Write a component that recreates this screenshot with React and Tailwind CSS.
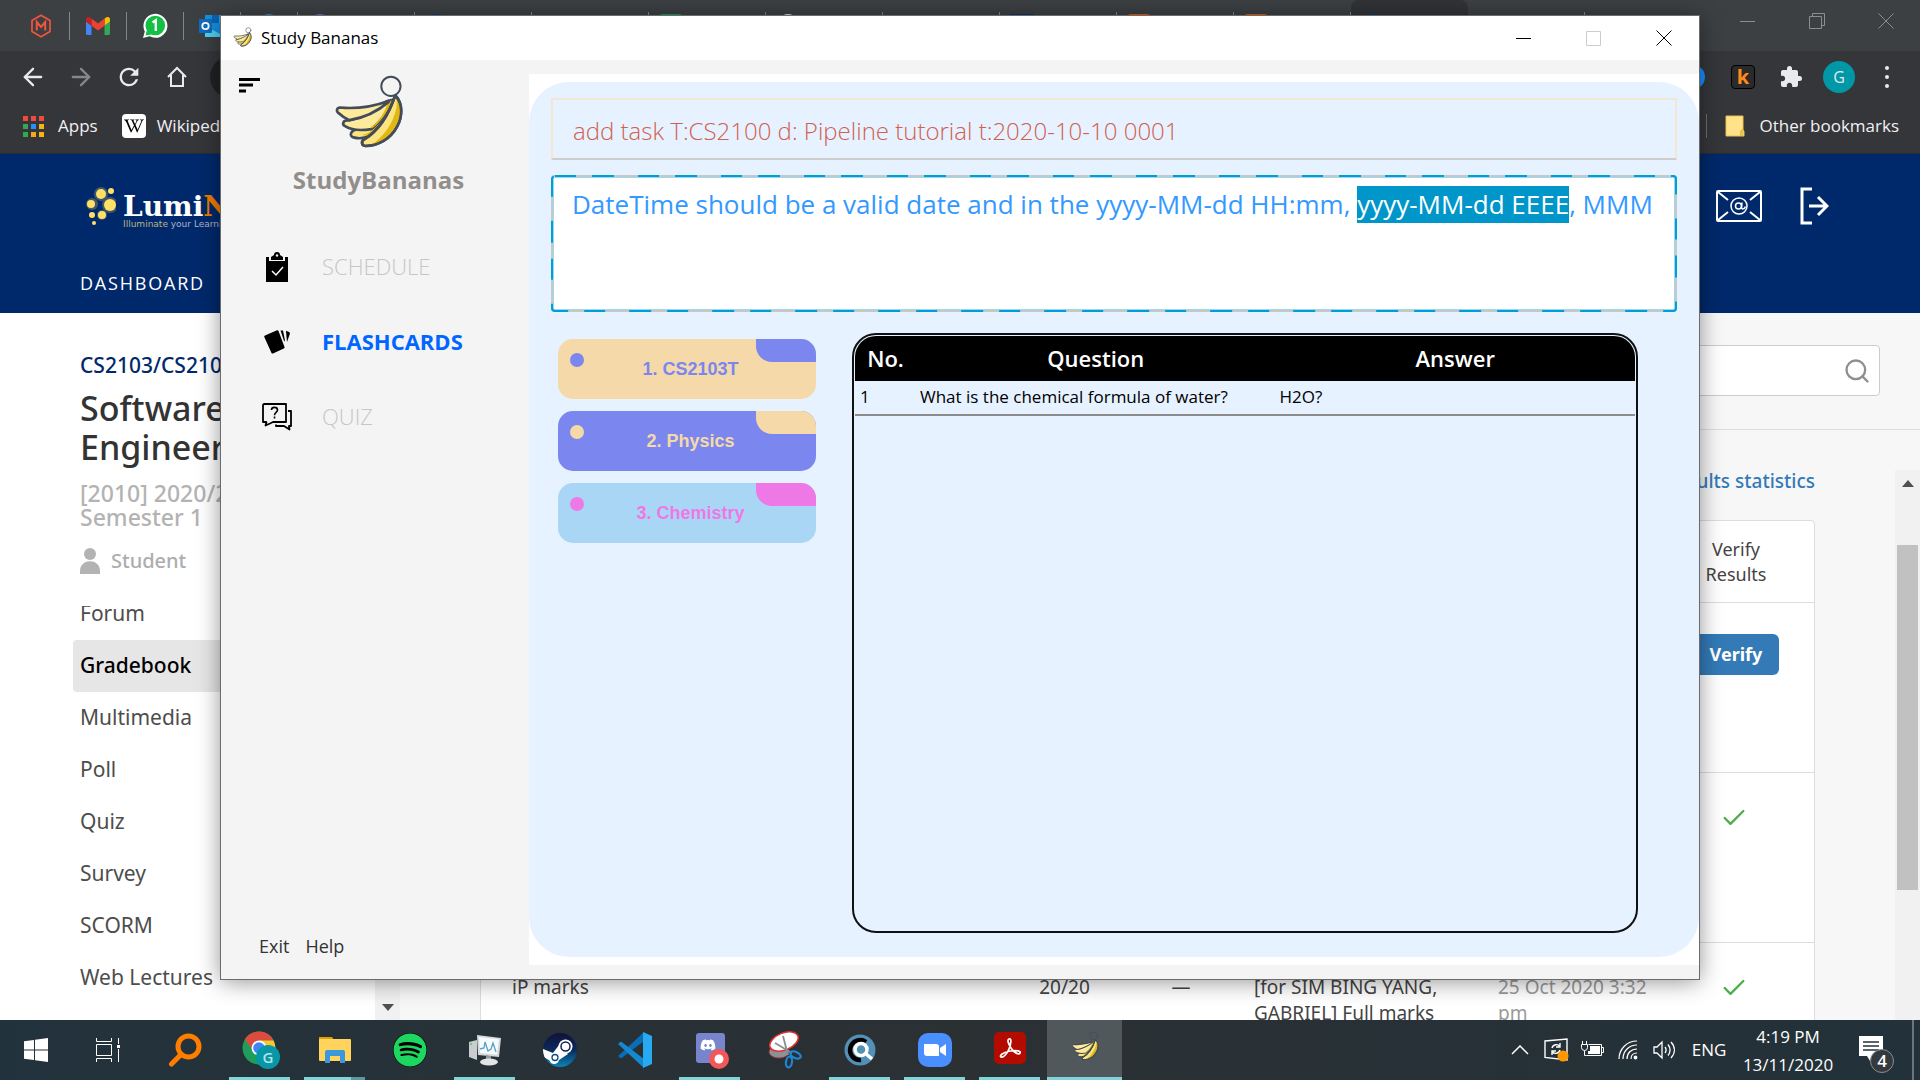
import React from "react";
import { FaSpotify, FaDiscord, FaWikipediaW } from "react-icons/fa";
import { MdExtension, MdRefresh } from "react-icons/md";
import { ArrowLeft, ArrowRight, Check, Search } from "lucide-react";

/* ---------- Icons ---------- */

function Bananas({ className }) {
  return (
    <svg viewBox="328 40 210 226" className={className} fill="none" stroke="#434c57" strokeWidth="8" strokeLinejoin="round" strokeLinecap="round" aria-hidden="true">
      <circle cx="499" cy="77" r="29" strokeWidth="6" />
      <path d="M396 206C378 210 372 226 386 231C402 236 420 233 436 228L458 200Z" fill="#fde480" />
      <path d="M412 224C430 220 444 210 456 196L470 200L440 230Z" fill="#e3b711" stroke="none" />
      <path d="M372 180C354 178 350 192 362 198C382 210 404 212 440 206C468 184 488 158 504 118L486 122C455 150 415 172 372 180Z" fill="#fdea9c" />
      <path d="M442 204C468 184 488 158 504 118L488 128C480 160 460 186 438 200Z" fill="#e3b711" stroke="none" />
      <path d="M492 121C445 138 395 146 345 141C334 143 334 154 343 159C352 168 362 174 374 179C420 172 462 150 492 124Z" fill="#fdea9c" />
      <path d="M512 104C536 130 534 168 518 198C498 236 460 257 422 257C409 256 409 241 420 236C462 210 492 165 512 104Z" fill="#fde480" />
      <path d="M517 114C533 140 529 172 514 196C496 228 470 246 442 252C476 230 506 190 516 140Z" fill="#e3b711" stroke="none" />
      <path d="M512 104C536 130 534 168 518 198C498 236 460 257 422 257C409 256 409 241 420 236C462 210 492 165 512 104Z" />
    </svg>
  );
}

function HexM() {
  return (
    <svg viewBox="0 0 24 24" className="size-6" fill="none" stroke="#f2543d" strokeWidth="1.7" aria-hidden="true">
      <path d="M12 1.2l9 5.3v11L12 22.8l-9-5.3v-11z" />
      <path d="M7.8 16.5V8l4.2 5 4.2-5v8.5" strokeWidth="2" />
    </svg>
  );
}

function Gmail() {
  return (
    <svg viewBox="0 0 24 18" className="h-[18px] w-6" aria-hidden="true">
      <path d="M1.6 18H5.5V8.7L0 4.6V16.400A1.6 1.6 0 0 0 1.600 18z" fill="#4285f4" />
      <path d="M18.500 18h3.900A1.600 1.600 0 0 0 24 16.400V4.600l-5.500 4.100z" fill="#34a853" />
      <path d="M18.500 1.600v7.100L24 4.600V2.400c0-2-2.300-3.200-3.900-2z" fill="#fbbc04" />
      <path d="M5.500 8.700V1.600L12 6.500l6.500-4.900v7.100L12 13.600z" fill="#ea4335" />
      <path d="M0 2.400v2.200l5.500 4.100V1.600L3.900.4C2.300-.8 0 .4 0 2.400z" fill="#c5221f" />
    </svg>
  );
}

function WhatsAppBadge() {
  return (
    <svg viewBox="0 0 26 26" className="size-[26px]" aria-hidden="true">
      <path d="M1 25l1.800-6.600A12 12 0 1 1 7.600 23.300z" fill="#fff" />
      <circle cx="13.300" cy="12.500" r="9.800" fill="#12c143" />
      <path d="M3.500 22.500l1.500-6 4.500 5z" fill="#12c143" />
      <path d="M10.500 9.500l3.300-2.300V18" stroke="#fff" strokeWidth="2.400" fill="none" />
    </svg>
  );
}

function Outlook() {
  return (
    <svg viewBox="0 0 28 26" className="h-[26px] w-7" aria-hidden="true">
      <rect x="7" y="2" width="21" height="22" fill="#1490df" />
      <rect x="14" y="2" width="7" height="8" fill="#0a64b5" />
      <rect x="21" y="2" width="7" height="8" fill="#32a9e7" />
      <path d="M7 13l21 11H7z" fill="#50d0f5" />
      <rect x="1" y="6" width="13" height="14" rx="1" fill="#0f6cbd" />
      <circle cx="7.500" cy="13" r="3.200" fill="none" stroke="#fff" strokeWidth="1.800" />
    </svg>
  );
}

function Home() {
  return (
    <svg viewBox="0 0 22 22" className="size-[22px]" fill="none" stroke="#e8eaed" strokeWidth="2" aria-hidden="true">
      <path d="M2 11L11 2l9 9M5 9v11h12V9" />
    </svg>
  );
}

function Tick() {
  return <Check className="mx-auto size-7 text-[#4cae4c]" strokeWidth={2} aria-label="Verified" />;
}

function MinIcon() {
  return (
    <svg viewBox="0 0 16 16" className="size-4" stroke="currentColor" aria-hidden="true">
      <path d="M0 8.500h15" />
    </svg>
  );
}

function MaxIcon() {
  return (
    <svg viewBox="0 0 16 16" className="size-4" fill="none" stroke="currentColor" aria-hidden="true">
      <path d="M.5 1.500h14v14h-14z" />
    </svg>
  );
}

function RestoreIcon() {
  return (
    <svg viewBox="0 0 16 16" className="size-4" fill="none" stroke="currentColor" aria-hidden="true">
      <path d="M.5 3.500h12v12h-12zM3.500 3.500v-3h12v12h-3" />
    </svg>
  );
}

function CloseIcon() {
  return (
    <svg viewBox="0 0 16 16" className="size-4" fill="none" stroke="currentColor" strokeWidth="1" aria-hidden="true">
      <path d="M.5.500l15 15M15.500.500l-15 15" />
    </svg>
  );
}

/* ---------- Browser ---------- */

const pinned = [
  { name: "Dashboard tab", icon: <HexM /> },
  { name: "Gmail", icon: <Gmail /> },
  { name: "WhatsApp", icon: <WhatsAppBadge /> },
  { name: "Outlook", icon: <Outlook /> },
  { name: "Messages", icon: <span className="size-6 rounded-full bg-[#2a8fc0]" /> },
];

const tabs = [
  { color: "bg-[#7b6fd0] rounded-full" },
  { color: "bg-[#0a3d91] rounded-full" },
  { color: "bg-transparent" },
  { color: "bg-[#0f9d58] rounded-sm" },
  { color: "bg-[#dddddd] rounded-full" },
  { color: "bg-transparent" },
  { color: "bg-[#12356b]" },
  { color: "bg-[#e65c00] rounded-sm" },
  { color: "bg-[#e65c00] rounded-sm" },
  { color: "bg-[#0a3d7a] rounded-full", active: true },
  { color: "bg-transparent" },
];

function TabStrip() {
  return (
    <div className="flex h-[51px] items-stretch bg-[#3c4043] pl-[13px]">
      {pinned.map((t) => (
        <button key={t.name} aria-label={t.name} className="flex w-[57px] items-center justify-center">
          <span className="flex flex-1 justify-center">{t.icon}</span>
          <span className="h-7 w-px bg-[#80868b]" />
        </button>
      ))}
      {tabs.map((t, i) => (
        <button
          key={i}
          aria-label={"Tab " + (i + 1)}
          className={
            t.active
              ? "flex w-[117px] items-center rounded-t-lg bg-[#323336] pl-[10px]"
              : "flex w-[117px] items-center pl-[10px]"
          }
        >
          <span className={"size-6 " + t.color} />
          {!t.active && <span className="ml-auto h-7 w-px bg-[#80868b]" />}
        </button>
      ))}
      <div className="ml-auto flex h-[42px] text-[#8b8e91]">
        <button aria-label="Minimize browser" className="flex w-[69px] items-center justify-center"><MinIcon /></button>
        <button aria-label="Restore browser" className="flex w-[69px] items-center justify-center"><RestoreIcon /></button>
        <button aria-label="Close browser" className="flex w-[69px] items-center justify-center"><CloseIcon /></button>
      </div>
    </div>
  );
}

function Toolbar() {
  return (
    <div className="flex h-[51px] items-center bg-[#35363a] pl-[9px] text-[#e8eaed]">
      <button aria-label="Back" className="flex w-12 justify-center"><ArrowLeft className="size-7" strokeWidth={2} /></button>
      <button aria-label="Forward" className="flex w-12 justify-center text-[#85878a]"><ArrowRight className="size-7" strokeWidth={2} /></button>
      <button aria-label="Reload" className="flex w-12 justify-center"><MdRefresh className="size-7" /></button>
      <button aria-label="Home" className="flex w-12 justify-center"><Home /></button>
      <input aria-label="Address" className="ml-[9px] h-[42px] flex-1 rounded-full bg-[#202124]" />
      <span className="ml-4 size-6 rounded-full bg-[#1a8cff]" />
      <button aria-label="k extension" className="flex w-[76px] justify-center">
        <span className="flex size-6 items-center justify-center rounded-sm border border-black bg-[#2a2a2a] text-xl font-bold leading-5 text-[#ff8c1a]">k</span>
      </button>
      <button aria-label="Extensions" className="flex w-5 justify-center"><MdExtension className="size-6 shrink-0" /></button>
      <button aria-label="Profile" className="ml-[22px] flex size-8 items-center justify-center rounded-full bg-[#0097a7] text-base leading-4">G</button>
      <button aria-label="Menu" className="ml-4 mr-[17px] flex w-8 flex-col items-center gap-[5px]">
        <span className="size-1 rounded-full bg-[#e8eaed]" />
        <span className="size-1 rounded-full bg-[#e8eaed]" />
        <span className="size-1 rounded-full bg-[#e8eaed]" />
      </button>
    </div>
  );
}

const appDots = [
  "bg-[#f04a3c]", "bg-[#f04a3c]", "bg-[#f04a3c]",
  "bg-[#34a853]", "bg-[#2a8cff]", "bg-[#f7b216]",
  "bg-[#34a853]", "bg-[#f7a616]", "bg-[#f7b216]",
];

function Bookmarks() {
  return (
    <div className="flex h-[52px] items-center border-b border-[#2a2b2e] bg-[#35363a] pb-[3px] pl-[23px] text-[17px] text-[#f0f1f2]">
      <a href="#apps" className="flex items-center">
        <span className="grid grid-cols-3 gap-[3px]">
          {appDots.map((c, i) => <span key={i} className={"size-[5px] " + c} />)}
        </span>
        <span className="ml-[14px]">Apps</span>
      </a>
      <a href="#wikipedia" className="ml-6 flex items-center">
        <span className="flex size-6 items-center justify-center rounded bg-white"><FaWikipediaW className="size-5 text-black" /></span>
        <span className="ml-[11px]">Wikipedia</span>
      </a>
      <a href="#other" className="ml-auto mr-[21px] flex items-center">
        <span className="h-6 w-px bg-[#6b6d70]" />
        <svg viewBox="0 0 20 22" className="ml-[18px] h-[22px] w-5" aria-hidden="true">
          <path d="M1 1h17v14l1 1v5H1z" fill="#ffe28a" stroke="#e8c14d" />
          <path d="M15 21v-5l2-2h1v7z" fill="#e8c14d" />
        </svg>
        <span className="ml-[14px]">Other bookmarks</span>
      </a>
    </div>
  );
}

function SiteHeader() {
  return (
    <header className="flex h-[159px] items-start justify-between bg-[#00296b] text-white">
      <div className="pl-20 pt-[30px]">
        <div className="flex h-[46px] items-start">
          <svg viewBox="0 0 36 46" className="h-[46px] w-9" fill="#ffe066" aria-hidden="true">
            <g opacity=".25">
              <circle cx="21" cy="10" r="7" /><circle cx="30" cy="21" r="8" /><circle cx="12" cy="20" r="6" /><circle cx="22" cy="31" r="5" />
            </g>
            <circle cx="21" cy="10" r="5" /><circle cx="31" cy="7" r="3" /><circle cx="11" cy="20" r="4" />
            <circle cx="30" cy="21" r="6" /><circle cx="12" cy="31" r="3" /><circle cx="22" cy="31" r="4" /><circle cx="14" cy="39" r="2" />
          </svg>
          <div className="ml-[7px] pt-3">
            <div className="font-['DejaVu_Serif',serif] text-[28px] font-bold leading-[22px]">
              Lumi<span className="text-[#ef7c00]">NUS</span>
            </div>
            <div className="font-['DejaVu_Sans',sans-serif] text-[9px] leading-3 text-[#b9b48a]">
              Illuminate <span className="text-[#aab4cc]">your Learning</span>
            </div>
          </div>
        </div>
        <a href="#dashboard" className="mt-[39px] block text-lg tracking-widest">DASHBOARD</a>
      </div>
      <div className="flex items-center gap-[37px] pr-[91px] pt-[33px]">
        <button aria-label="Mail">
          <svg viewBox="0 0 46 32" className="h-8 w-[46px]" fill="none" stroke="#fff" strokeWidth="2" aria-hidden="true">
            <rect x="1" y="1" width="44" height="30" rx="1" />
            <path d="M2 2l10 8M44 2l-10 8M2 30l10-8M44 30l-10-8" />
            <ellipse cx="23" cy="16" rx="8" ry="8" strokeWidth="1.500" />
            <circle cx="22.500" cy="16" r="3" strokeWidth="1.500" />
            <path d="M26 12.500l-.5 5c0 2 3 2 4-1" strokeWidth="1.500" />
          </svg>
        </button>
        <button aria-label="Log out">
          <svg viewBox="0 0 30 38" className="h-[38px] w-[30px]" fill="none" stroke="#fff" strokeWidth="3" aria-hidden="true">
            <path d="M13 2H3v34h10M10 19h17M19 10l9 9-9 9" />
          </svg>
        </button>
      </div>
    </header>
  );
}

const modules = ["Forum", "Gradebook", "Multimedia", "Poll", "Quiz", "Survey", "SCORM", "Web Lectures"];

function ModuleSidebar() {
  return (
    <aside className="flex w-[375px] shrink-0 flex-col bg-white">
      <div className="pl-20 pt-[37px]">
        <a href="#module" className="block text-[21px] font-medium leading-[30px] text-[#00296b]">CS2103/CS2103T</a>
        <h1 className="mt-[9px] w-60 text-[34px] font-medium leading-[39px] text-[#333]">Software Engineering</h1>
        <p className="mt-[14px] w-64 text-[23px] font-medium leading-6 text-[#b3b3b3]">[2010] 2020/2021 Semester 1</p>
        <p className="mt-4 flex items-center text-xl font-medium leading-8 text-[#adadad]">
          <svg viewBox="0 0 20 26" className="mr-[11px] h-[26px] w-5" fill="#b3b3b3" aria-hidden="true">
            <circle cx="10" cy="6" r="6" />
            <path d="M0 26V23c0-13 20-13 20 0v3z" />
          </svg>
          Student
        </p>
      </div>
      <nav className="mt-[29px] flex-1 overflow-hidden">
        <ul className="-mt-[18px]">
          {modules.map((m) => (
            <li key={m}>
              <a
                href={"#" + m}
                className={
                  m === "Gradebook"
                    ? "ml-[73px] flex h-[52px] items-center rounded bg-[#e6e6e6] pl-[7px] text-[21px] font-medium text-black"
                    : "ml-[73px] flex h-[52px] items-center pl-[7px] text-[21px] text-[#4d4d4d]"
                }
              >
                {m}
              </a>
            </li>
          ))}
        </ul>
      </nav>
    </aside>
  );
}

function Gradebook() {
  return (
    <main className="flex min-w-0 flex-1 flex-col bg-[#f7f7f7]">
      <div className="flex h-[117px] items-center border-b border-[#ddd] pb-4 pl-20 pr-10">
        <label className="mt-[15px] flex h-[51px] flex-1 items-center rounded border border-[#ccc] bg-white pr-2">
          <input aria-label="Search" className="h-full flex-1" />
          <Search className="size-7 text-[#8f8f8f]" strokeWidth={2} />
        </label>
      </div>
      <div className="flex min-h-0 flex-1">
        <div className="min-w-0 flex-1 overflow-hidden pl-20 pr-20 pt-9">
          <div className="flex justify-end">
            <a href="#statistics" className="text-[19px] font-medium leading-[30px] text-[#337ab7]">Results statistics</a>
          </div>
          <div className="mt-[24px] rounded border border-[#ddd] bg-white">
            <table className="w-full table-fixed border-collapse text-[19px] leading-[26px] text-[#444]">
              <colgroup>
                <col />
                <col className="w-[143px]" />
                <col className="w-[90px]" />
                <col className="w-[244px]" />
                <col className="w-[188px]" />
                <col className="w-[156px]" />
              </colgroup>
              <thead>
                <tr className="h-[81px] border-b border-[#ddd] text-lg">
                  <th className="pl-[31px] text-left font-normal">Item</th>
                  <th className="font-normal">Marks</th>
                  <th className="font-normal">Grade</th>
                  <th className="pl-7 text-left font-normal">Remark</th>
                  <th className="pl-7 text-left font-normal">Released</th>
                  <th className="pt-[2px] font-normal leading-[25px]">Verify<br />Results</th>
                </tr>
              </thead>
              <tbody className="align-top">
                <tr className="h-[170px] border-b border-[#ddd]">
                  <td colSpan={5} />
                  <td className="pt-[31px] text-center">
                    <button className="h-[41px] rounded-md bg-[#337ab7] px-[17px] text-lg font-bold text-white">Verify</button>
                  </td>
                </tr>
                <tr className="h-[170px] border-b border-[#ddd]">
                  <td colSpan={5} />
                  <td className="pr-1 pt-[31px]"><Tick /></td>
                </tr>
                <tr>
                  <td className="pl-[31px] pt-[31px]">iP marks</td>
                  <td className="pt-[31px] text-center">20/20</td>
                  <td className="pt-[31px] text-center">—</td>
                  <td className="pl-7 pt-[31px]">[for SIM BING YANG, GABRIEL] Full marks</td>
                  <td className="pl-7 pt-[31px] text-[#999]">25 Oct 2020 3:32 pm</td>
                  <td className="pr-1 pt-[31px]"><Tick /></td>
                </tr>
              </tbody>
            </table>
          </div>
        </div>
        <div className="mt-[40px] flex w-[25px] flex-col items-center bg-[#f1f1f1] pt-[10px]">
          <svg viewBox="0 0 12 7" className="h-[7px] w-3" fill="#505050" aria-hidden="true"><path d="M0 7l6-7 6 7z" /></svg>
          <div className="mt-[58px] h-[345px] w-[21px] bg-[#c1c1c1]" />
        </div>
      </div>
    </main>
  );
}

/* ---------- Study Bananas window ---------- */

function ClipboardIcon() {
  return (
    <svg viewBox="0 0 22 30" className="h-[30px] w-[22px]" aria-hidden="true">
      <path d="M0 5h3v4h16V5h3v25H0z" />
      <path d="M5 8V5l3-2a3 3 0 0 1 6 0l3 2v3z" />
      <circle cx="11" cy="3.500" r="1.200" fill="#f4f4f4" />
      <path d="M6 19l4 4 7-8" fill="none" stroke="#fff" strokeWidth="1.500" />
    </svg>
  );
}

function CardsIcon() {
  return (
    <svg viewBox="0 0 26 24" className="h-6 w-[26px]" aria-hidden="true">
      <path d="M1 5.500L13 .3a1.200 1.200 0 0 1 1.500.7L20.500 17a1.200 1.200 0 0 1-.7 1.500L9 23.500a1.200 1.200 0 0 1-1.500-.6L.3 7A1.200 1.200 0 0 1 1 5.500z" />
      <path d="M16.500.500h2.500l2 10-.8 1zM22 .800l3 1.200c1 .5 1 1 .8 2L23 12l-.5-5z" />
    </svg>
  );
}

function QuizIcon() {
  return (
    <svg viewBox="0 0 30 28" className="h-7 w-[30px]" fill="none" stroke="#000" strokeWidth="1.800" strokeLinejoin="round" aria-hidden="true">
      <path d="M2 1h22v18H11l-3 1.500-4.500 2L4.500 19H1V2z" />
      <path d="M26 8h3v15h-2l.5 3.500L22 23h-8v-1.500" />
      <path d="M9.500 7c0-3.500 6-3.500 6 0 0 2.500-3 2.300-3 5.200M12.500 13.500v2" strokeWidth="1.600" />
    </svg>
  );
}

const navItems = [
  { label: "SCHEDULE", icon: <ClipboardIcon /> },
  { label: "FLASHCARDS", icon: <CardsIcon />, active: true },
  { label: "QUIZ", icon: <QuizIcon /> },
];

function AppSidebar() {
  return (
    <aside className="flex w-[308px] shrink-0 flex-col">
      <div className="flex items-start pl-[18px] pt-[14px]">
        <button aria-label="Toggle menu" className="mt-[3px]">
          <svg viewBox="0 0 21 16" className="h-4 w-[21px]" aria-hidden="true">
            <path d="M0 1h21v3H0zM0 6.500h14v3H0zM0 12.500h7v3H0z" />
          </svg>
        </button>
        <Bananas className="ml-[74px] h-[75px] w-[70px]" />
      </div>
      <h2 className="mt-[13px] pl-[7px] text-center text-2xl font-bold leading-9 text-[#928e8c]">StudyBananas</h2>
      <nav className="mt-[31px]">
        {navItems.map((n) => (
          <button key={n.label} className="flex h-[75px] w-full items-center pl-10">
            <span className="flex w-8 justify-center">{n.icon}</span>
            <span className={n.active ? "ml-[29px] text-[22px] font-bold text-[#0066ff]" : "ml-[29px] text-[22px] font-light text-[#c6c6c6]"}>
              {n.label}
            </span>
          </button>
        ))}
      </nav>
      <div className="mt-auto flex gap-4 pb-[19px] pl-[38px] text-lg leading-7 text-[#333]">
        <button>Exit</button>
        <button>Help</button>
      </div>
    </aside>
  );
}

const sets = [
  { label: "1. CS2103T", card: "bg-[#f5d9a8] text-[#7b86ef]", accent: "bg-[#7b86ef]" },
  { label: "2. Physics", card: "bg-[#7b86ef] text-[#f5d9a8]", accent: "bg-[#f5d9a8]" },
  { label: "3. Chemistry", card: "bg-[#aad6f6] text-[#ee78e6]", accent: "bg-[#ee78e6]" },
];

function StudyWindow() {
  return (
    <section className="absolute bottom-[101px] left-[221px] right-[221px] top-4 flex flex-col bg-[#f4f4f4] shadow-[0_2px_22px_rgba(0,0,0,0.45)] outline-1 outline-[#6b6b6b]">
      <div className="flex h-11 shrink-0 items-center bg-white pl-[11px]">
        <Bananas className="mb-[3px] h-5 w-[21px]" />
        <span className="ml-2 text-[17px] text-black">Study Bananas</span>
        <div className="ml-auto flex h-full">
          <button aria-label="Minimize" className="flex w-[70px] items-center justify-center"><MinIcon /></button>
          <button aria-label="Maximize" className="flex w-[70px] items-center justify-center text-[#ccc]"><MaxIcon /></button>
          <button aria-label="Close" className="flex w-[70px] items-center justify-center"><CloseIcon /></button>
        </div>
      </div>
      <div className="flex min-h-0 flex-1">
        <AppSidebar />
        <div className="mb-[14px] mt-[14px] flex min-w-0 flex-1 bg-white pb-2 pt-2">
          <div className="flex min-w-0 flex-1 flex-col rounded-[40px] bg-[#e6f2ff] px-[22px] pt-4">
            <input
              aria-label="Command"
              defaultValue="add task T:CS2100 d: Pipeline tutorial t:2020-10-10 0001"
              className="h-[62px] shrink-0 border-2 border-[#f3e6d3] border-b-[#cfcdcb] bg-transparent px-5 pt-[2px] text-2xl font-light text-[#d2604e]"
            />
            <div className="relative mt-[15px] flex h-[137px] shrink-0 rounded border-[3px] border-[#9ad9ee] bg-white">
              <output className="block min-w-0 flex-1 overflow-hidden whitespace-nowrap pl-[18px] pt-2 text-[26px] leading-[37px] text-[#3399ff]">
                DateTime should be a valid date and in the yyyy-MM-dd HH:mm,{" "}
                <mark className="inline-block h-[37px] bg-[#0096c9] text-white">yyyy-MM-dd EEEE</mark>, MMM
              </output>
              <svg className="pointer-events-none absolute -inset-[2px] h-[135px] w-[calc(100%+4px)] overflow-visible" fill="none" aria-hidden="true">
                <rect width="100%" height="100%" rx="3" stroke="#c4c8c6" strokeWidth="2" />
                <rect width="100%" height="100%" rx="3" stroke="#009ed6" strokeWidth="2" strokeDasharray="21 16 22 24" />
              </svg>
            </div>
            <div className="mb-6 mt-[21px] flex min-h-0 flex-1 pl-[7px] pr-[39px]">
              <div className="flex w-[258px] shrink-0 flex-col gap-3 pt-[6px]">
                {sets.map((s) => (
                  <button key={s.label} className={"relative flex h-[60px] items-center overflow-hidden rounded-[15px] pr-[19px] " + s.card}>
                    <span className={"ml-3 mt-[14px] size-[14px] self-start rounded-full " + s.accent} />
                    <span className="flex-1 text-center font-['Liberation_Sans',sans-serif] text-lg font-bold">{s.label}</span>
                    <span className={"absolute right-0 top-0 h-[23px] w-[60px] rounded-bl-2xl " + s.accent} />
                  </button>
                ))}
              </div>
              <div className="ml-9 min-w-0 flex-1 rounded-[24px] border-2 border-[#111] p-px">
                <div className="overflow-hidden rounded-t-[21px]">
                  <table className="w-full table-fixed border-collapse text-black">
                    <colgroup>
                      <col className="w-[61px]" />
                      <col />
                      <col />
                    </colgroup>
                    <thead>
                      <tr className="h-[45px] bg-black text-[22px] text-white">
                        <th className="font-semibold">No.</th>
                        <th className="font-semibold">Question</th>
                        <th className="font-semibold">Answer</th>
                      </tr>
                    </thead>
                    <tbody>
                      <tr className="h-[34px] border-b-2 border-[#8c8c8c] text-[17px] leading-6">
                        <td className="px-[5px] pb-px">1</td>
                        <td className="px-1 pb-px">What is the chemical formula of water?</td>
                        <td className="px-1 pb-px">H2O?</td>
                      </tr>
                    </tbody>
                  </table>
                </div>
              </div>
            </div>
          </div>
        </div>
      </div>
    </section>
  );
}

/* ---------- Taskbar ---------- */

function Chrome() {
  return (
    <svg viewBox="0 0 38 38" className="ml-[3px] size-[38px]" aria-hidden="true">
      <circle cx="17" cy="17" r="16.500" fill="#1e9e5a" />
      <path d="M17 .5A16.500 16.500 0 0 1 31.500 9.500H17L9.500 17 2.800 8.600A16.500 16.500 0 0 1 17 .5z" fill="#dd4b3e" />
      <path d="M17 9.500h14.500A16.500 16.500 0 0 1 20 33.200L24 20z" fill="#fdc52f" />
      <circle cx="17" cy="17" r="7.500" fill="#fff" />
      <circle cx="17" cy="17" r="5.800" fill="#4286f5" />
      <circle cx="26" cy="26" r="12" fill="#0897a6" />
      <text x="26" y="31.500" textAnchor="middle" fontSize="15" fontFamily="Open Sans" fontWeight="600" fill="#b5e3e8">G</text>
    </svg>
  );
}

function Folder() {
  return (
    <svg viewBox="0 0 32 28" className="h-7 w-8" aria-hidden="true">
      <path d="M0 1h13l2 3v4H0z" fill="#e0a000" />
      <rect y="3" width="32" height="22" rx="1" fill="#ffd35c" />
      <path d="M6 27V16a2 2 0 0 1 2-2h16a2 2 0 0 1 2 2v11h-5v-7H11v7z" fill="#3c98dd" />
    </svg>
  );
}

function Monitor() {
  return (
    <svg viewBox="0 0 34 32" className="h-8 w-[34px]" aria-hidden="true">
      <path d="M1 8l8-2v20l-8-3z" fill="#c9cdcf" />
      <path d="M9 1l24 3-2 19-21-2z" fill="#d5d8da" />
      <path d="M11 3l20 2.300-2 15.500-17-1.800z" fill="#f4fafd" />
      <path d="M12 15l4-1 1-6 3 9 3-2 2-6 2 6 1 3" stroke="#5c9fc6" strokeWidth="1.300" fill="none" />
      <path d="M18 21l5 1v4h-5z" fill="#999" />
      <ellipse cx="21" cy="28" rx="9" ry="3.500" fill="#e2e4e5" />
      <circle cx="3" cy="10" r="1" fill="#4c4" />
    </svg>
  );
}

function SteamIcon() {
  return (
    <svg viewBox="0 0 34 34" className="size-[34px]" fill="none" aria-hidden="true">
      <defs>
        <linearGradient id="steam" x1="0" y1="0" x2="0" y2="1">
          <stop offset="0" stopColor="#111238" />
          <stop offset="0.500" stopColor="#0b2a5c" />
          <stop offset="1" stopColor="#0a86b8" />
        </linearGradient>
        <clipPath id="steamClip"><circle cx="17" cy="17" r="17" /></clipPath>
      </defs>
      <circle cx="17" cy="17" r="17" fill="url(#steam)" />
      <g clipPath="url(#steamClip)">
        <path d="M-1 15.500l11 4.500 6-8 9 9-9 6c-1 5-8 5.500-9.500.5L-1 23z" fill="#fff" />
        <circle cx="22.500" cy="13.500" r="7" fill="#fff" />
        <circle cx="22.500" cy="13.500" r="4.500" stroke="#0d2150" strokeWidth="1.500" />
        <circle cx="12" cy="24.500" r="3" stroke="#0c4a7d" strokeWidth="1.300" />
      </g>
    </svg>
  );
}

function VsCode() {
  return (
    <svg viewBox="0 0 36 36" className="size-9" aria-hidden="true">
      <path d="M27 0L4.500 21 1 24l3 2.500L27 9z" fill="#0a6db8" />
      <path d="M27 36L1 12l3-2.500L27 27z" fill="#1588d0" />
      <path d="M26 0l9 4v28l-9 4z" fill="#27aaf2" />
    </svg>
  );
}

function DiscordIcon() {
  return (
    <svg viewBox="0 0 36 38" className="ml-1 h-[38px] w-9" aria-hidden="true">
      <rect x="2" y="2" width="29" height="30" rx="3" fill="#7885cc" />
      <FaDiscord x="6" y="6" width="21" height="21" color="#fff" />
      <circle cx="25" cy="28" r="10" fill="#f25858" />
      <circle cx="25" cy="28" r="4.500" fill="#fff" />
    </svg>
  );
}

function Snip() {
  return (
    <svg viewBox="0 0 34 38" className="h-[38px] w-[34px]" fill="none" aria-hidden="true">
      <ellipse cx="11" cy="21" rx="10" ry="6" fill="#8d9194" stroke="#a33" strokeWidth=".8" />
      <ellipse cx="16" cy="10.500" rx="15" ry="8.500" transform="rotate(-22 16 10.500)" fill="#fff" stroke="#e03030" strokeWidth="1.600" />
      <path d="M7 12l17 10M15 5l5 19" stroke="#8a8e90" strokeWidth="1.800" />
      <ellipse cx="27.500" cy="24" rx="5.500" ry="3" transform="rotate(25 27.500 24)" stroke="#1d87d6" strokeWidth="2.200" />
      <ellipse cx="21" cy="31" rx="3" ry="5.500" transform="rotate(8 21 31)" stroke="#1d87d6" strokeWidth="2.200" />
    </svg>
  );
}

function Cq() {
  return (
    <svg viewBox="0 0 32 32" className="size-8" fill="none" aria-hidden="true">
      <circle cx="16" cy="16" r="15.500" fill="#5490b5" />
      <path d="M22 8A10 10 0 1 0 17 26" stroke="#000" strokeWidth="4.500" />
      <circle cx="17" cy="15.500" r="6" stroke="#fff" strokeWidth="3.500" />
      <path d="M21 19l7 6" stroke="#fff" strokeWidth="3.500" />
    </svg>
  );
}

function Zoom() {
  return (
    <svg viewBox="0 0 34 34" className="size-[34px]" aria-hidden="true">
      <rect width="34" height="34" rx="10" fill="#4a8fff" />
      <path d="M6 11h12a3 3 0 0 1 3 3v9H9a3 3 0 0 1-3-3zM22 15l6-4v12l-6-4z" fill="#fff" />
    </svg>
  );
}

function Acrobat() {
  return (
    <svg viewBox="0 0 32 32" className="mb-1 size-8" fill="none" aria-hidden="true">
      <rect width="32" height="32" rx="5" fill="#b30b00" />
      <path d="M15 7c3-1 2 5 0 10-2 5-6 9-8 8s2-5 9-6 11 0 10 2-6 0-9-5-4-8-2-9z" stroke="#fff" strokeWidth="1.700" />
    </svg>
  );
}

const programs = [
  {
    name: "Everything",
    icon: (
      <svg viewBox="0 0 34 34" className="size-[34px]" fill="none" stroke="#ff7e00" strokeWidth="5" strokeLinecap="round" aria-hidden="true">
        <circle cx="20.500" cy="13.500" r="10.500" />
        <path d="M13 21.500L3.500 31" />
      </svg>
    ),
  },
  { name: "Chrome", icon: <Chrome />, open: true },
  { name: "File Explorer", icon: <Folder />, open: true, stacked: true },
  { name: "Spotify", icon: <FaSpotify className="size-[34px] rounded-full bg-black text-[#1ed760]" /> },
  { name: "Performance Monitor", icon: <Monitor />, open: true },
  { name: "Steam", icon: <SteamIcon /> },
  { name: "Visual Studio Code", icon: <VsCode /> },
  { name: "Discord", icon: <DiscordIcon />, open: true },
  { name: "Snipping Tool", icon: <Snip /> },
  { name: "Cold Turkey", icon: <Cq />, open: true },
  { name: "Zoom", icon: <Zoom />, open: true },
  { name: "Acrobat Reader", icon: <Acrobat />, open: true },
  { name: "Study Bananas", icon: <Bananas className="mb-2 h-[30px] w-7" />, open: true, active: true },
];

function Taskbar() {
  return (
    <footer className="relative flex h-[60px] shrink-0 items-stretch bg-linear-to-r from-[#22323c] via-[#2b3033] to-[#22313a] text-white">
      <button aria-label="Start" className="flex w-[72px] items-center justify-center">
        <svg viewBox="0 0 24 24" className="size-6" fill="#fff" aria-hidden="true">
          <path d="M0 3.300L10 2v9.500H0zM11 1.800L24 0v11.500H11zM0 12.500h10V22L0 20.700zM11 12.500h13V24l-13-1.800z" />
        </svg>
      </button>
      <button aria-label="Task View" className="mr-[3px] flex w-[72px] items-center justify-center">
        <svg viewBox="0 0 25 24" className="h-6 w-[25px]" fill="none" stroke="#fff" aria-hidden="true">
          <path d="M.5 6.500h15v11H.5zM.5 0v3.500h15V0M.5 24v-3.500h15V24M22.500 0v6M22.500 11v13" />
          <path d="M21 7h3v3h-3z" fill="#fff" stroke="none" />
        </svg>
      </button>
      {programs.map((p) => (
        <button
          key={p.name}
          aria-label={p.name}
          className={p.active ? "flex w-[75px] flex-col items-center bg-[#50585b]" : "flex w-[75px] flex-col items-center"}
        >
          <span className="flex flex-1 items-center pt-[3px]">{p.icon}</span>
          <span className={p.active ? "h-[3px] w-full bg-[#80d4da]" : p.open ? "flex h-[3px] w-[61px] justify-end bg-[#80d4da]" : "h-[3px]"}>
            {p.stacked && <span className="h-[3px] w-[14px] bg-[#5b9a9f]" />}
          </span>
        </button>
      ))}
      <div className="ml-auto flex items-center">
        <div className="flex items-center">
          <button aria-label="Show hidden icons" className="flex w-9 justify-center">
            <svg viewBox="0 0 18 10" className="h-[10px] w-[18px]" fill="none" stroke="#fff" strokeWidth="1.500" aria-hidden="true"><path d="M1 9l8-8 8 8" /></svg>
          </button>
          <button aria-label="Update" className="flex w-9 justify-center">
            <svg viewBox="0 0 25 24" className="h-6 w-[25px]" fill="none" stroke="#fff" strokeWidth="1.400" aria-hidden="true">
              <path d="M1 3l22-2v21L1 19.500z" />
              <path d="M8 10a4.500 4.500 0 0 1 8-1.500M16 5v4h-4M16 12a4.500 4.500 0 0 1-8 1.500M8 17v-4h4" />
              <circle cx="19" cy="18" r="5.500" fill="#ff9800" stroke="none" />
            </svg>
          </button>
          <button aria-label="Battery" className="flex w-9 justify-center">
            <svg viewBox="0 0 24 18" className="h-[18px] w-6" fill="none" stroke="#fff" strokeWidth="1" aria-hidden="true">
              <path d="M8.500 3.500h13v11h-15M22 6.500h1.500v5H22" />
              <path d="M10 5h10v8H8v-3h2z" fill="#fff" stroke="none" />
              <path d="M2.500 0v3M6.500 0v3M1.500 3.500h6v3a3 3 0 0 1-6 0zM4.500 9.500v5h2" />
            </svg>
          </button>
          <button aria-label="Network" className="flex w-9 justify-center">
            <svg viewBox="0 0 20 20" className="size-5" fill="none" stroke="#fff" strokeWidth="1.200" aria-hidden="true">
              <path d="M1 19C1 9 9 1 19 1M5 19C5 11 11 5 19 5M9 19c0-6 4-10 10-10M13 19c0-4 2-6 6-6" />
              <circle cx="17.500" cy="17.500" r="1.300" fill="#fff" />
            </svg>
          </button>
          <button aria-label="Volume" className="flex w-9 justify-center">
            <svg viewBox="0 0 23 20" className="h-5 w-[23px]" fill="none" stroke="#fff" strokeWidth="1.300" aria-hidden="true">
              <path d="M1 7h3l5-5v16l-5-5H1zM12 7c1.500 2 1.500 4 0 6M15 4.500c3 4 3 7 0 11M18 2c4.500 5 4.500 11 0 16" />
            </svg>
          </button>
        </div>
        <button className="w-[54px] text-center text-[17px]">ENG</button>
        <div className="w-[104px] pt-px text-center text-[17px] leading-7">
          <div>4:19 PM</div>
          <div>13/11/2020</div>
        </div>
        <button aria-label="Notifications" className="ml-[18px] h-10 w-[38px] pt-1">
          <svg viewBox="0 0 38 40" className="h-10 w-[38px]" aria-hidden="true">
            <path d="M1 2h24v20H14l-2 5-3-5H1z" fill="#fff" />
            <path d="M5 8h16M5 12h16M5 16h16" stroke="#26323a" strokeWidth="1.500" />
            <circle cx="24" cy="27" r="11.500" fill="#33393d" stroke="#888e91" />
            <text x="24" y="33" textAnchor="middle" fontSize="17" fontFamily="Open Sans" fontWeight="600" fill="#fff">4</text>
          </svg>
        </button>
        <span className="ml-4 mr-[6px] h-[60px] w-[2px] bg-[#6b757a]" />
      </div>
    </footer>
  );
}

export default function App() {
  return (
    <div className="relative flex h-screen flex-col overflow-hidden font-['Open_Sans','Noto_Sans',sans-serif]">
      <div className="flex min-h-0 flex-1 flex-col">
        <TabStrip />
        <Toolbar />
        <Bookmarks />
        <SiteHeader />
        <div className="flex min-h-0 flex-1 font-['Noto_Sans','Open_Sans',sans-serif]">
          <ModuleSidebar />
          <div className="flex w-[25px] items-end justify-center bg-[#f1f1f1] pb-[9px]">
            <svg viewBox="0 0 12 7" className="h-[7px] w-3" fill="#505050" aria-hidden="true"><path d="M0 0l6 7 6-7z" /></svg>
          </div>
          <Gradebook />
        </div>
      </div>
      <StudyWindow />
      <Taskbar />
    </div>
  );
}
